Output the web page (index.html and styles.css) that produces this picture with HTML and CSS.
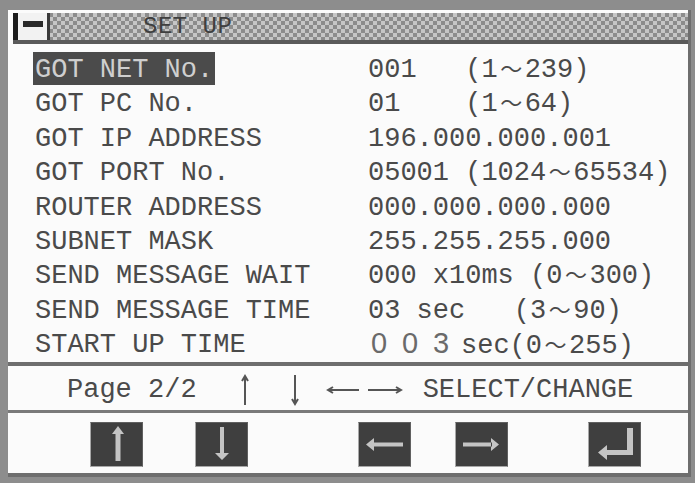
FILE: index.html
```html
<!DOCTYPE html>
<html lang="en">
<head>
    <meta charset="UTF-8">
    <title>SET UP</title>
    <link rel="stylesheet" href="styles.css">
</head>
<body>
    <div class="panel">
        <div class="titlebar">
            <span class="winicon"><span class="winbar"></span></span>
            <span class="title">SET UP</span>
        </div>

        <div class="list">
            <div class="row"><span class="label sel">GOT NET No.</span><span class="val">001   (1<span class="wave">〜</span>239)</span></div>
            <div class="row"><span class="label">GOT PC No.</span><span class="val">01    (1<span class="wave">〜</span>64)</span></div>
            <div class="row"><span class="label">GOT IP ADDRESS</span><span class="val">196.000.000.001</span></div>
            <div class="row"><span class="label">GOT PORT No.</span><span class="val">05001 (1024<span class="wave">〜</span>65534)</span></div>
            <div class="row"><span class="label">ROUTER ADDRESS</span><span class="val">000.000.000.000</span></div>
            <div class="row"><span class="label">SUBNET MASK</span><span class="val">255.255.255.000</span></div>
            <div class="row"><span class="label">SEND MESSAGE WAIT</span><span class="val">000 x10ms (0<span class="wave">〜</span>300)</span></div>
            <div class="row"><span class="label">SEND MESSAGE TIME</span><span class="val">03 sec   (3<span class="wave">〜</span>90)</span></div>
            <div class="row"><span class="label">START UP TIME</span><span class="val"><span class="digit">0</span><span class="digit">0</span><span class="digit">3</span>sec(0<span class="wave">〜</span>255)</span></div>
        </div>

        <div class="footer">
            <span class="page">Page 2/2</span>
            <!-- cursor keys legend -->
            <svg class="arr-up" width="10" height="32" viewBox="0 0 10 32"><path d="M5 2 V31 M2 7 L5 2 L8 7" fill="none" stroke="#555" stroke-width="2"/></svg>
            <svg class="arr-down" width="10" height="32" viewBox="0 0 10 32"><path d="M5 1 V30 M2 25 L5 30 L8 25" fill="none" stroke="#555" stroke-width="2"/></svg>
            <svg class="arr-left" width="34" height="12" viewBox="0 0 34 12"><path d="M2 6 H33 M7 3 L2 6 L7 9" fill="none" stroke="#555" stroke-width="2"/></svg>
            <svg class="arr-right" width="36" height="12" viewBox="0 0 36 12"><path d="M1 6 H34 M29 3 L34 6 L29 9" fill="none" stroke="#555" stroke-width="2"/></svg>
            <span class="hint">SELECT/CHANGE</span>
        </div>

        <div class="keys">
            <div class="key k-up">
                <svg width="51" height="43" viewBox="0 0 51 43"><path d="M21 11 L27 3 L33 11 Z M24.5 10 H29.5 V38 H24.5 Z" fill="#c4c4c4"/></svg>
            </div>
            <div class="key k-down">
                <svg width="51" height="43" viewBox="0 0 51 43"><path d="M24 4 H28 V31 H24 Z M19 30 H33 L26 37 Z" fill="#c4c4c4"/></svg>
            </div>
            <div class="key k-left">
                <svg width="51" height="43" viewBox="0 0 51 43"><path d="M14 19.5 H44 V23.5 H14 Z M7 21.5 L15 15 V28 Z" fill="#c4c4c4"/></svg>
            </div>
            <div class="key k-right">
                <svg width="51" height="43" viewBox="0 0 51 43"><path d="M7 19.5 H36 V23.5 H7 Z M43 21.5 L35 15 V28 Z" fill="#c4c4c4"/></svg>
            </div>
            <div class="key k-enter">
                <svg width="51" height="43" viewBox="0 0 51 43"><path d="M38 5 H44 V32 H38 Z M17 27 H44 V32 H17 Z M9 29.5 L18 22 V37 Z" fill="#c4c4c4"/></svg>
            </div>
        </div>
    </div>
</body>
</html>
```

FILE: styles.css
```css
*{
    margin: 0;
    padding: 0;
    box-sizing: border-box;
}

body{
    background-color: #8d8d8d;
    font-family: "Liberation Mono", "Noto Sans CJK JP", monospace;
    color: #4a4a4a;
    width: 695px;
    height: 483px;
    overflow: hidden;
}

.panel{
    margin: 10px 0 0 8px;
    width: 683px;
    height: 467px;
    background: #fbfbfb;
    border-right: 3px solid #6e6e6e;
    border-bottom: 4px solid #6e6e6e;
    padding-top: 3px;
}

/* title bar with checker pattern */
.titlebar{
    margin-left: 5px;
    height: 31px;
    display: flex;
    align-items: center;
    border-bottom: 4px solid #5a5a5a;
    background-color: #a9a9a9;
    background-image: repeating-conic-gradient(#8c8c8c 0 25%, #c6c6c6 0 50%);
    background-size: 8px 8px;
}

.winicon{
    width: 37px;
    height: 27px;
    border-left: 5px solid #1c1c1c;
    border-right: 3px solid #3a3a3a;
    background: #f2f2f2;
    display: flex;
    align-items: center;
    justify-content: center;
    align-self: flex-start;
}

.winbar{
    width: 20px;
    height: 6px;
    background: #2a2a2a;
    margin-bottom: 5px;
}

.title{
    margin-left: 93px;
    font-size: 24px;
    color: #3f3f3f;
    letter-spacing: 0.5px;
}

.list{
    padding: 8px 0 0 25px;
    height: 322px;
    display: grid;
    grid-template-columns: 335px 1fr;
    grid-auto-rows: 34.4px;
    border-bottom: 4px solid #6e6e6e;
}

.row{
    display: contents;
}

.label, .val{
    font-size: 27px;
    line-height: 33px;
    padding-top: 2px;
    white-space: pre;
    align-self: start;
}

.label{
    padding-left: 2px;
    padding-right: 2px;
    justify-self: start;
}

.sel{
    background: #4b4b4b;
    color: #cfcfcf;
    height: 33px;
    overflow: hidden;
}

/* full width wave dash */
.wave{
    font-family: "Noto Sans CJK JP", sans-serif;
    font-size: 22px;
    line-height: 0;
    padding: 0 2.5px;
}

.digit{
    display: inline-block;
    width: 31px;
    padding-left: 3px;
    font-family: "Liberation Sans", sans-serif;
    font-size: 29px;
    line-height: 1;
    color: #6a6a6a;
}

.footer{
    height: 47px;
    display: flex;
    align-items: center;
    padding: 4px 0 0 59px;
    border-bottom: 3px solid #7a7a7a;
    font-size: 27px;
}

.arr-up{ margin-left: 43px; }
.arr-down{ margin-left: 40px; }
.arr-left{ margin-left: 26px; }
.arr-right{ margin-left: 7px; }
.hint{ margin-left: 20px; }

.keys{
    display: flex;
    align-items: flex-start;
    padding: 9px 0 0 82px;
}

.key{
    width: 53px;
    height: 45px;
    background: #3f3f3f;
    border: 1px solid #a8a8a8;
    border-top-color: #606060;
    border-right-color: #606060;
    display: flex;
}

.k-down{ margin-left: 52px; }
.k-left{ margin-left: 110px; }
.k-right{ margin-left: 44px; }
.k-enter{ margin-left: 80px; }
```
